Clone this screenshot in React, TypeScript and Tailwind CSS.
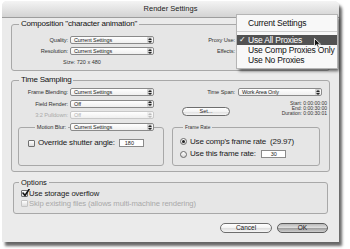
import type { ReactNode } from 'react';

// Tiny up/down arrows used at the right end of every popup button
const Stepper = ({ muted }: { muted?: boolean }) => (
    <div className={`mr-[1px] flex h-[6px] w-[5px] shrink-0 items-center justify-center rounded-[1px] ${muted ? 'bg-[#ececec]' : 'bg-[#cfcfcf]'}`}>
        <svg width="4" height="5" viewBox="0 0 4 5" fill={muted ? '#bbb' : '#222'}>
            <polygon points="0,2 2,0 4,2" />
            <polygon points="0,3 2,5 4,3" />
        </svg>
    </div>
);

function Select({ value, className, muted }: { value: string; className: string; muted?: boolean }) {
    return (
        <div
            className={`flex h-[8px] shrink-0 items-center rounded-[2px] border bg-gradient-to-b from-white to-[#efefef] ${muted ? 'border-[#c8c8c8] text-[#b0b0b0]' : 'border-[#8a8a8a] text-[#222]'} ${className}`}
        >
            <span className="flex-1 truncate pl-[3px] text-[5.5px] leading-[6px] tracking-[-0.1px]">{value}</span>
            <Stepper muted={muted} />
        </div>
    );
}

function Lbl({ className, children, muted }: { className: string; children: ReactNode; muted?: boolean }) {
    return (
        <span className={`shrink-0 text-right text-[5.7px] leading-[8px] tracking-[-0.1px] ${muted ? 'text-[#aaa]' : 'text-[#333]'} ${className}`}>
            {children}
        </span>
    );
}

function Group({ title, className, children }: { title: string; className: string; children: ReactNode }) {
    return (
        <div className={`rounded-[3px] border border-[#a8a8a8] bg-[#e6e6e6] ${className}`}>
            <div className="-mt-[6px] ml-[7px] w-fit bg-[linear-gradient(#ebebeb_55%,#e6e6e6_55%)] px-[2px] text-[8px] leading-[10px] tracking-[-0.2px] text-[#111]">
                {title}
            </div>
            {children}
        </div>
    );
}

const CheckBox = ({ checked, muted }: { checked?: boolean; muted?: boolean }) => (
    <div
        className={`relative h-[7px] w-[7px] shrink-0 rounded-[1px] border bg-gradient-to-b from-white to-[#dcdcdc] ${muted ? 'border-[#c4c4c4]' : 'border-[#707070]'}`}
    >
        {checked && (
            <svg className="absolute -top-[2px] left-0" width="8" height="8" viewBox="0 0 8 8" fill="none" stroke="#111" strokeWidth="1.6" strokeLinecap="round">
                <polyline points="1,4 3,6.5 7,0.5" />
            </svg>
        )}
    </div>
);

const Radio = ({ on }: { on?: boolean }) => (
    <div className="flex h-[7px] w-[7px] shrink-0 items-center justify-center rounded-full border border-[#6a6a6a] bg-gradient-to-b from-white to-[#d6d6d6]">
        {on && <div className="h-[3px] w-[3px] rounded-full bg-[#222]" />}
    </div>
);

function Pill({ children, className, primary }: { children: ReactNode; className: string; primary?: boolean }) {
    return (
        <div
            className={`flex items-center justify-center rounded-full border text-[6.5px] leading-none ${primary ? 'border-[#5c5c5c] bg-[linear-gradient(#b9b9b9,#e2e2e2_50%,#9d9d9d_52%,#cfcfcf)]' : 'border-[#6e6e6e] bg-[linear-gradient(#ffffff,#f3f3f3_50%,#dedede_52%,#f6f6f6)]'} ${className}`}
        >
            {children}
        </div>
    );
}

export default function App() {
    return (
        <div className="h-[249px] w-[350px] overflow-hidden bg-white pl-[2px] pt-[1px] font-['Liberation_Sans',Arial,sans-serif] text-[#1a1a1a]">
            <div className="relative h-[241px] w-[337px] rounded-t-[5px] bg-[#ebebeb] shadow-[3px_4px_3px_rgba(0,0,0,0.6)]">
                {/* Title bar */}
                <div className="flex h-[17px] items-center justify-center rounded-t-[5px] border-b border-[#9d9d9d] bg-gradient-to-b from-[#f4f4f4] to-[#d3d3d3] text-[7.5px] text-[#222]">
                    Render Settings
                </div>

                <div className="px-[9px]">
                    {/* Composition */}
                    <Group title={'Composition "character animation"'} className="mt-[6px] h-[47px]">
                        <div className="mt-[7px] flex h-[8px] items-center">
                            <Lbl className="w-[56px]">Quality:</Lbl>
                            <Select className="ml-[2px] w-[84px]" value="Current Settings" />
                            <Lbl className="w-[81px]">Proxy Use:</Lbl>
                            {/* covered by the open menu */}
                            <Select className="ml-[2px] w-[85px]" value="" />
                        </div>
                        <div className="mt-[3px] flex h-[8px] items-center">
                            <Lbl className="w-[56px]">Resolution:</Lbl>
                            <Select className="ml-[2px] w-[84px]" value="Current Settings" />
                            <Lbl className="w-[81px]">Effects:</Lbl>
                            <Select className="ml-[2px] w-[85px]" value="" />
                        </div>
                        <div className="ml-[51px] mt-[3.5px] text-[5.5px] leading-[7px] text-[#333]">Size: 720 x 480</div>
                    </Group>

                    {/* Time Sampling */}
                    <Group title="Time Sampling" className="mt-[9px] h-[92px]">
                        <div className="flex">
                            <div className="w-[153px] shrink-0">
                                <div className="mt-[3px] flex h-[8px] items-center">
                                    <Lbl className="w-[56px]">Frame Blending:</Lbl>
                                    <Select className="ml-[2px] w-[84px]" value="Current Settings" />
                                </div>
                                <div className="mt-[3.5px] flex h-[8px] items-center">
                                    <Lbl className="w-[56px]">Field Render:</Lbl>
                                    <Select className="ml-[2px] w-[84px]" value="Off" />
                                </div>
                                <div className="mt-[3.5px] flex h-[8px] items-center">
                                    <Lbl className="w-[56px]" muted>3:2 Pulldown:</Lbl>
                                    <Select className="ml-[2px] w-[84px]" value="Off" muted />
                                </div>
                                <div className="ml-[6px] mt-[8px] h-[39px] w-[146px] rounded-[3px] border border-[#a8a8a8]">
                                    <div className="-mt-[5px] flex h-[8px] items-center">
                                        <Lbl className="w-[49px]">
                                            <span className="bg-[#e6e6e6] px-[2px]">Motion Blur:</span>
                                        </Lbl>
                                        <Select className="ml-[2px] w-[84px]" value="Current Settings" />
                                    </div>
                                    <div className="mt-[8px] flex h-[8px] items-center">
                                        <div className="ml-[9px]">
                                            <CheckBox />
                                        </div>
                                        <span className="ml-[3px] text-[8px] leading-[8px] tracking-[-0.2px]">Override shutter angle:</span>
                                        <div className="ml-[4px] h-[8px] w-[25px] border border-[#8a8a8a] bg-white pl-[5px] text-[5.5px] leading-[6px]">180</div>
                                    </div>
                                </div>
                            </div>

                            <div className="ml-[7px] w-[158px] shrink-0">
                                <div className="mt-[3px] flex h-[8px] items-center">
                                    <Lbl className="w-[63px]">Time Span:</Lbl>
                                    <Select className="ml-[3px] w-[84px]" value="Work Area Only" />
                                </div>
                                <div className="mt-[4px] flex">
                                    <Pill className="ml-[10px] mt-[7px] h-[9px] w-[48px] !text-[5.5px]">Set...</Pill>
                                    <div className="ml-auto mr-[3px] mt-[0.5px] text-right text-[5px] leading-[5px] text-[#333]">
                                        <div>Start: 0:00:00:00</div>
                                        <div>End: 0:00:30:00</div>
                                        <div>Duration: 0:00:30:01</div>
                                    </div>
                                </div>
                                <div className="mt-[11px] h-[39px] w-[148px] rounded-[3px] border border-[#a8a8a8]">
                                    <div className="-mt-[3px] ml-[10px] w-fit bg-[#e6e6e6] px-[2px] text-[4.8px] leading-[6px] text-[#333]">Frame Rate</div>
                                    <div className="mt-[7px] flex h-[7px] items-center">
                                        <div className="ml-[7px]">
                                            <Radio on />
                                        </div>
                                        <span className="ml-[3px] whitespace-pre text-[8px] leading-[8px] tracking-[-0.2px]">Use comp's frame rate  (29.97)</span>
                                    </div>
                                    <div className="mt-[5px] flex h-[8px] items-center">
                                        <div className="ml-[7px]">
                                            <Radio />
                                        </div>
                                        <span className="ml-[3px] text-[8px] leading-[8px] tracking-[-0.2px]">Use this frame rate:</span>
                                        <div className="ml-[5px] h-[8px] w-[25px] border border-[#8a8a8a] bg-white pl-[9px] text-[5.5px] leading-[6px]">30</div>
                                    </div>
                                </div>
                            </div>
                        </div>
                    </Group>

                    {/* Options */}
                    <div className="mx-[2px] mt-[10px] h-[32px] rounded-[3px] border border-[#a8a8a8] bg-[#e6e6e6]">
                        <div className="-mt-[5px] ml-[5px] w-fit bg-[linear-gradient(#ebebeb_55%,#e6e6e6_55%)] px-[2px] text-[7.5px] leading-[9px] text-[#111]">Options</div>
                        <div className="mt-[3px] flex h-[7px] items-center">
                            <div className="ml-[7px]">
                                <CheckBox checked />
                            </div>
                            <span className="ml-[1px] text-[7.7px] leading-[8px] tracking-[-0.1px]">Use storage overflow</span>
                        </div>
                        <div className="mt-[3px] flex h-[7px] items-center">
                            <div className="ml-[7px]">
                                <CheckBox muted />
                            </div>
                            <span className="ml-[1px] text-[7.7px] leading-[8px] tracking-[-0.1px] text-[#a9a9a9]">Skip existing files (allows multi-machine rendering)</span>
                        </div>
                    </div>

                    {/* Buttons */}
                    <div className="mt-[9px] flex justify-end gap-[5px] pr-[2px]">
                        <Pill className="h-[10px] w-[52px]">Cancel</Pill>
                        <Pill className="h-[10px] w-[51px]" primary>OK</Pill>
                    </div>
                </div>

                {/* Open popup menu for Proxy Use */}
                <div className="absolute left-[235px] top-[14px] h-[53px] w-[100px] bg-[#f8f8f8] pt-[3px] shadow-[2px_3px_3px_rgba(0,0,0,0.6)] outline outline-1 outline-[#b5b5b5]">
                    <div className="flex h-[10px] items-center pl-[11px] text-[8.5px] tracking-[-0.2px] text-[#111]">Current Settings</div>
                    <div className="mb-[3.5px] mt-[2.5px] h-px bg-[#cfcfcf]" />
                    <div className="flex h-[10px] items-center bg-[#525252] text-[8.5px] tracking-[-0.2px] text-white">
                        <span className="w-[11px] pl-[2px] font-['DejaVu_Sans',sans-serif] text-[8px]">✓</span>
                        Use All Proxies
                    </div>
                    <div className="flex h-[10px] items-center pl-[11px] text-[8.5px] tracking-[-0.2px] text-[#111]">Use Comp Proxies Only</div>
                    <div className="flex h-[10px] items-center pl-[11px] text-[8.5px] tracking-[-0.2px] text-[#111]">Use No Proxies</div>
                </div>

                {/* Mouse pointer */}
                <svg className="absolute left-[312px] top-[37px]" width="8" height="11" viewBox="0 0 8 11">
                    <path d="M0.5 0.5 L0.5 8.5 L2.5 6.7 L4 10 L5.3 9.4 L3.9 6.2 L6.5 6.2 Z" fill="#111" stroke="#fff" strokeWidth="0.8" strokeLinejoin="round" />
                </svg>
            </div>
        </div>
    );
}
